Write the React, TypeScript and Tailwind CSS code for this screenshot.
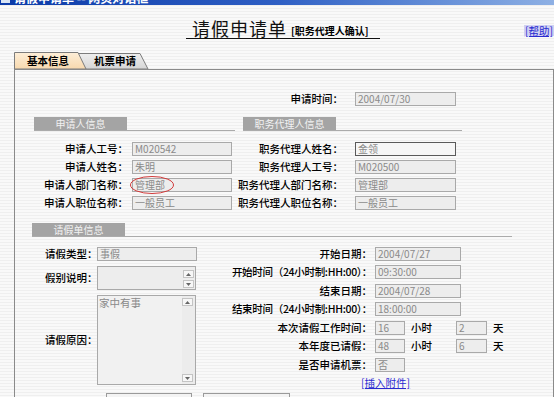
import React from "react";

const Field = ({ w, value, dark }: { w: string; value?: string; dark?: boolean }) => (
  <div
    className={
      "h-[14px] shrink-0 overflow-hidden whitespace-nowrap pl-[2px] text-[10px] font-normal leading-[12px] text-[#8a8a8a] " +
      w +
      (dark ? " border border-[#5a5a5a] bg-[#f6f6f6]" : " border border-[#a9a9a9] bg-[#ededed]")
    }
  >
    {value}
  </div>
);

const SecHeader = ({ title, w }: { title: string; w: string }) => (
  <div className={"flex border-b border-[#ababab] " + w}>
    <div className="flex h-[13px] w-[93px] items-center justify-center bg-[#a4a4a4] text-[10px] font-normal leading-[13px] text-[#f2f2f2]">
      {title}
    </div>
  </div>
);

const ArrowBtn = ({ up }: { up?: boolean }) => (
  <div className="flex h-[8px] w-[11px] items-center justify-center border border-[#c4c4c4] bg-[#f7f7f7]">
    <svg width="5" height="3" viewBox="0 0 5 3">
      {up ? <polygon points="0,3 5,3 2.5,0" fill="#666" /> : <polygon points="0,0 5,0 2.5,3" fill="#666" />}
    </svg>
  </div>
);

export default function App() {
  return (
    <div className="relative h-[397px] w-[554px] overflow-hidden whitespace-nowrap bg-[repeating-linear-gradient(180deg,#f9f9f9_0px,#f9f9f9_2px,#efefef_2px,#efefef_3px)] [font-family:'Noto_Sans_CJK_SC',sans-serif] text-black">
      {/* window title bar */}
      <div className="h-[5px] overflow-hidden bg-gradient-to-r from-[#0b3aa8] via-[#2f5fc4] to-[#8eb0e4]">
        <div className="-mt-[9px] flex items-center gap-[4px] pl-[1px] text-[12px] font-bold leading-[14px] text-white">
          <span className="inline-block h-[10px] w-[9px] bg-[#d8e4f4]" />
          <span>请假申请单 -- 网页对话框</span>
        </div>
      </div>

      {/* header */}
      <div className="flex h-[47px] items-start pt-[13px]">
        <div className="ml-[186px] flex h-[21px] w-[194px] items-end border-b border-[#111] pl-[6px]">
          <span className="text-[18px] leading-[20px] tracking-[1px] text-[#111]">请假申请单</span>
          <span className="mb-[1px] ml-[4px] text-[10px] font-bold leading-[12px]">[职务代理人确认]</span>
        </div>
        <div className="ml-auto mt-[7px] bg-[#cfd0f2] px-[1px] text-[10.5px] leading-[11px] text-[#2b2bd0] underline">
          [帮助]
        </div>
      </div>

      {/* tabs */}
      <div className="relative ml-[14px] h-[17px] w-[140px]">
        <svg className="absolute inset-0" width="140" height="17" viewBox="0 0 140 17">
          <defs>
            <linearGradient id="t1" x1="0" y1="0" x2="0" y2="1">
              <stop offset="0" stopColor="#fdeed8" />
              <stop offset="1" stopColor="#f8d9ae" />
            </linearGradient>
            <linearGradient id="t2" x1="0" y1="0" x2="0" y2="1">
              <stop offset="0" stopColor="#eeeeee" />
              <stop offset="1" stopColor="#d6d6d6" />
            </linearGradient>
          </defs>
          <polygon points="60,1.5 126,1.5 134,17 60,17" fill="url(#t2)" stroke="#7c7c7c" strokeWidth="1" />
          <polygon points="0.5,17 0.5,0.5 64,0.5 72,17" fill="url(#t1)" stroke="#7c7c7c" strokeWidth="1" />
        </svg>
        <div className="relative flex h-[17px] items-center text-[10.5px] font-bold leading-[12px]">
          <span className="ml-[13px]">基本信息</span>
          <span className="ml-[25px] mt-[1px]">机票申请</span>
        </div>
      </div>

      {/* panel */}
      <div className="ml-[14px] h-[340px] w-[540px] border-l border-r border-t border-[#8a8a8a] pt-[22px] text-[10.5px] font-medium leading-[14px]">
        {/* apply time */}
        <div className="flex">
          <div className="w-[328px] text-right">申请时间：</div>
          <div className="ml-[12px]">
            <Field w="w-[101px]" value="2004/07/30" />
          </div>
        </div>

        {/* applicant + agent */}
        <div className="mt-[11px] flex">
          <div className="w-[217px]">
            <div className="ml-[19px]">
              <SecHeader title="申请人信息" w="w-[201px]" />
            </div>
            <div className="mt-[11px] flex flex-col gap-[4px]">
              <div className="flex">
                <div className="w-[113px] text-right">申请人工号：</div>
                <div className="ml-[4px]"><Field w="w-[100px]" value="M020542" /></div>
              </div>
              <div className="flex">
                <div className="w-[113px] text-right">申请人姓名：</div>
                <div className="ml-[4px]"><Field w="w-[100px]" value="朱明" /></div>
              </div>
              <div className="flex">
                <div className="w-[113px] text-right">申请人部门名称：</div>
                <div className="relative ml-[4px]">
                  <Field w="w-[100px]" value="管理部" />
                  <svg className="absolute -left-[3px] -top-[3px]" width="46" height="20" viewBox="0 0 46 20">
                    <ellipse cx="23" cy="10" rx="21.5" ry="8.5" fill="none" stroke="#d23a3a" strokeWidth="1" />
                  </svg>
                </div>
              </div>
              <div className="flex">
                <div className="w-[113px] text-right">申请人职位名称：</div>
                <div className="ml-[4px]"><Field w="w-[100px]" value="一般员工" /></div>
              </div>
            </div>
          </div>
          <div className="w-[300px]">
            <div className="ml-[11px]">
              <SecHeader title="职务代理人信息" w="w-[219px]" />
            </div>
            <div className="mt-[11px] flex flex-col gap-[4px]">
              <div className="flex">
                <div className="w-[111px] text-right">职务代理人姓名：</div>
                <div className="ml-[12px]"><Field w="w-[101px]" value="金领" dark /></div>
              </div>
              <div className="flex">
                <div className="w-[111px] text-right">职务代理人工号：</div>
                <div className="ml-[12px]"><Field w="w-[101px]" value="M020500" /></div>
              </div>
              <div className="flex">
                <div className="w-[111px] text-right">职务代理人部门名称：</div>
                <div className="ml-[12px]"><Field w="w-[101px]" value="管理部" /></div>
              </div>
              <div className="flex">
                <div className="w-[111px] text-right">职务代理人职位名称：</div>
                <div className="ml-[12px]"><Field w="w-[101px]" value="一般员工" /></div>
              </div>
            </div>
          </div>
        </div>

        {/* leave info */}
        <div className="ml-[17px] mt-[13px]">
          <SecHeader title="请假单信息" w="w-[480px]" />
        </div>
        <div className="mt-[10px] flex">
          <div className="w-[200px] shrink-0">
            <div className="flex items-center">
              <div className="ml-[30px] w-[52px]">请假类型：</div>
              <Field w="w-[100px]" value="事假" />
            </div>
            <div className="mt-[5px] flex items-center">
              <div className="ml-[30px] w-[52px]">假别说明：</div>
              <div className="flex h-[24px] w-[99px] justify-end border border-[#a9a9a9] bg-[#ededed] pr-[1px] pt-[3px]">
                <div className="flex flex-col gap-[2px]">
                  <ArrowBtn up />
                  <ArrowBtn />
                </div>
              </div>
            </div>
            <div className="mt-[5px] flex items-center">
              <div className="ml-[30px] w-[52px]">请假原因：</div>
              <div className="flex h-[90px] w-[99px] border border-[#a9a9a9] bg-[#f1f1f1]">
                <div className="flex-1 pl-[1px] text-[10.5px] font-normal leading-[14px] text-[#8a8a8a]">家中有事</div>
                <div className="flex w-[13px] flex-col justify-between bg-[#ececec] py-[2px]">
                  <ArrowBtn up />
                  <ArrowBtn />
                </div>
              </div>
            </div>
            <div className="ml-[91px] mt-[8px] flex gap-[11px]">
              <div className="h-[20px] w-[86px] shrink-0 border border-[#9a9a9a] bg-[#f4f4f4]" />
              <div className="h-[20px] w-[87px] shrink-0 border border-[#9a9a9a] bg-[#f4f4f4]" />
            </div>
          </div>

          <div className="flex flex-col">
            <div className="flex h-[18px]">
              <div className="w-[157px] text-right">开始日期：</div>
              <div className="ml-[3px]"><Field w="w-[86px]" value="2004/07/27" /></div>
            </div>
            <div className="flex h-[19px]">
              <div className="w-[157px] text-right tracking-[-0.3px]">开始时间（24小时制:HH:00）：</div>
              <div className="ml-[3px]"><Field w="w-[86px]" value="09:30:00" /></div>
            </div>
            <div className="flex h-[18px]">
              <div className="w-[157px] text-right">结束日期：</div>
              <div className="ml-[3px]"><Field w="w-[86px]" value="2004/07/28" /></div>
            </div>
            <div className="flex h-[19px]">
              <div className="w-[157px] text-right tracking-[-0.3px]">结束时间（24小时制:HH:00）：</div>
              <div className="ml-[3px]"><Field w="w-[86px]" value="18:00:00" /></div>
            </div>
            <div className="flex h-[18px]">
              <div className="w-[157px] text-right">本次请假工作时间：</div>
              <div className="ml-[3px]"><Field w="w-[30px]" value="16" /></div>
              <div className="ml-[6px] w-[45px]">小时</div>
              <Field w="w-[31px]" value="2" />
              <div className="ml-[6px]">天</div>
            </div>
            <div className="flex h-[19px]">
              <div className="w-[157px] text-right">本年度已请假：</div>
              <div className="ml-[3px]"><Field w="w-[30px]" value="48" /></div>
              <div className="ml-[6px] w-[45px]">小时</div>
              <Field w="w-[31px]" value="6" />
              <div className="ml-[6px]">天</div>
            </div>
            <div className="flex h-[18px]">
              <div className="w-[157px] text-right">是否申请机票：</div>
              <div className="ml-[3px]"><Field w="w-[30px]" value="否" /></div>
            </div>
            <div className="ml-[146px] text-[10.5px] font-normal leading-[14px] text-[#2a2ad0] underline">[插入附件]</div>
          </div>
        </div>
      </div>
    </div>
  );
}
